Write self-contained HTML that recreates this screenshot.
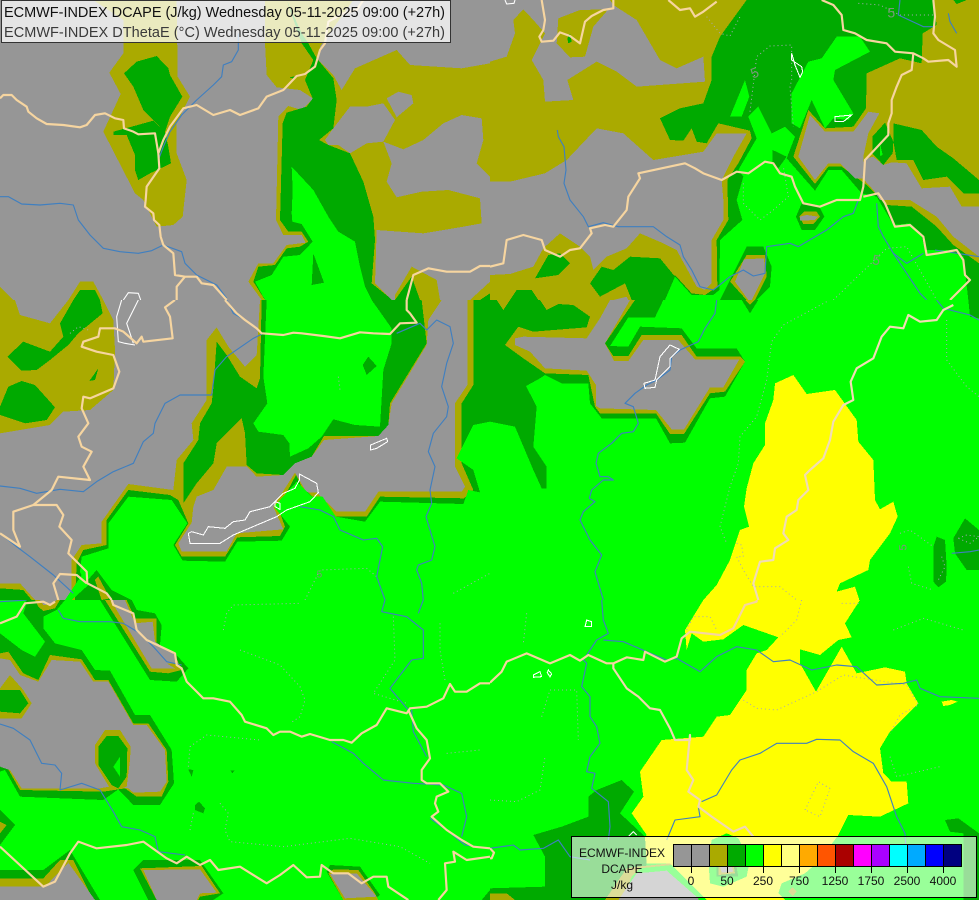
<!DOCTYPE html>
<html><head><meta charset="utf-8"><title>ECMWF-INDEX DCAPE</title>
<style>
html,body{margin:0;padding:0;background:#969696;width:979px;height:900px;overflow:hidden}
svg{display:block}
polygon{shape-rendering:crispEdges;stroke:none}
.g{fill:#969696}.o{fill:#aaaa00}.e{fill:#00aa00}.n{fill:#00ff00}.y{fill:#ffff00}
.b,.r,.w,.d{fill:none;stroke-linejoin:round}
.b{stroke:#f6d5a0;stroke-width:6.5}
.r{stroke:#3f7fc0;stroke-width:3.4}
.w{stroke:#fff;stroke-width:3.2}
.d{stroke:#a8a8b8;stroke-width:3;stroke-dasharray:3 9}
.l{font-family:"Liberation Sans",sans-serif;fill:#779977;font-size:42px}
.t{font-family:"Liberation Sans",sans-serif;font-size:12px;fill:#111;text-anchor:middle}
.h{font-family:"Liberation Sans",sans-serif;font-size:14.5px}
</style></head><body>
<svg width="979" height="900" viewBox="0 0 979 900" xmlns="http://www.w3.org/2000/svg">

<!-- tile 1 -->
<svg x="0" y="0" width="490" height="300" viewBox="0 0 1470 900">
<rect width="1470" height="900" class="g"/>
<polygon class="o" points="280,0 530,0 533,230 570,290 530,370 530,460 560,540 548,650 520,675 470,680 430,600 405,580 310,395 362,282 328,218 370,160 370,60"/>
<polygon class="o" points="795,0 795,130 800,225 830,262 900,270 940,296 905,330 865,318 835,350 828,660 850,705 905,705 917,728 860,735 820,790 775,790 745,845 785,900 1175,900 1125,850 1130,690 1270,700 1390,680 1445,670 1440,595 1470,530 1470,190 1385,205 1230,195 1190,150 1065,205 1025,270 1000,225 955,180 960,140 1060,0"/>
<polygon class="g" points="1150,425 1210,448 1270,420 1330,370 1385,345 1445,355 1450,420 1430,490 1470,530 1440,595 1345,570 1265,575 1190,592 1160,545 1175,490"/>
<polygon class="g" points="975,420 1000,385 1050,320 1100,320 1150,310 1185,360 1150,425 1100,430 1050,460 1015,435 985,435"/>
<polygon class="g" points="1160,295 1195,275 1235,285 1240,310 1190,352"/>
<polygon class="o" points="1185,885 1235,800 1310,840 1320,900 1185,900"/>
<polygon class="o" points="1410,900 1470,845 1470,900"/>
<polygon class="o" points="205,900 240,845 280,845 310,900"/>
<polygon class="o" points="0,860 40,900 0,900"/>
<polygon class="e" points="372,220 410,185 470,168 505,205 510,225 547,290 510,350 495,395 460,360 430,330 400,260"/>
<polygon class="e" points="340,395 395,380 460,362 495,395 505,440 513,490 450,520 415,540 405,510 405,465 380,405 340,405"/>
<polygon class="e" points="860,0 905,100 925,130 950,175 1000,235 1010,300 1000,385 957,420 985,435 1050,460 1090,545 1120,650 1125,720 1115,850 1165,890 1175,900 795,900 760,845 775,800 825,795 860,745 900,740 925,725 905,695 865,695 840,660 848,370 860,338 920,320 938,296 915,240 940,180 905,130"/>
<polygon class="e" points="868,232 890,228 885,238"/>
<polygon class="n" points="875,500 940,570 985,650 1015,695 1065,725 1080,800 1095,860 1115,900 795,900 765,845 815,825 850,770 900,765 938,725 905,672 877,665 875,640 878,570"/>
<polygon class="e" points="940,760 972,848 935,855"/>
<polygon class="e" points="220,900 240,870 285,870 300,900"/>
<polygon class="e" points="1185,900 1235,830 1260,900"/>
<polygon class="e" points="1440,900 1470,880 1470,900"/>
<polyline class="r" points="715,100 715,150 695,185 670,195 665,230 640,255 590,300 545,345 510,395 490,440 475,480"/>
<polyline class="r" points="0,590 25,590 65,612 120,615 180,610 220,615 235,660 270,705 310,745 360,755 415,760 455,752 490,735 545,755 555,790 590,825 650,855 680,895"/>
<polyline class="w" points="370,900 385,878 415,880 422,900"/>
<polyline class="b" points="0,295 10,285 35,285 50,300 80,320 85,335 110,355 140,372 190,375 240,382 260,375 285,345 315,340 345,355 370,360 372,385 400,395 415,403 465,400 470,430 475,460 478,505 440,560 437,600 435,620 460,640 462,660 478,675 482,710 490,735 520,760 525,825 555,830 590,830 605,850 640,855 680,900"/>
<polyline class="b" points="555,830 530,860 530,900"/>
<polyline class="b" points="475,460 490,420 510,380 550,325 590,315 640,345 690,330 720,345 775,325 800,290 850,270 890,228 915,222 945,200 960,150 975,130 985,65 1030,40 1070,30 1090,0"/>
<polyline class="b" points="1220,900 1240,825 1285,805 1340,815 1410,815 1440,798 1470,798"/>
</svg>

<!-- tile 2 -->
<svg x="490" y="0" width="489" height="300" viewBox="0 0 1467 900">
<rect width="1467" height="900" class="o"/>
<polygon class="g" points="0,0 360,0 370,15 440,60 510,180 560,205 640,170 645,245 440,260 380,215 320,185 232,240 250,300 165,305 160,240 125,180 165,100 130,60 100,28 70,60 75,100 50,170 0,185"/>
<polygon class="o" points="205,55 270,30 355,28 310,80 285,170 240,172 200,130"/>
<polygon class="g" points="0,545 60,545 165,520 230,480 320,385 400,400 445,440 490,480 640,455 680,400 770,400 730,470 695,540 700,600 700,660 665,720 665,850 645,870 620,860 560,750 520,730 450,700 410,745 350,770 310,810 300,770 270,740 210,700 160,745 130,800 60,822 0,825"/>
<polygon class="e" points="770,0 690,110 665,170 665,240 640,310 570,325 510,355 540,420 580,422 605,385 620,425 650,430 685,370 780,392 785,415 745,490 712,540 715,660 680,720 682,860 645,885 605,880 555,825 500,900 1467,900 1467,790 1390,735 1340,680 1265,620 1190,615 1130,555 1055,500 1015,500 975,552 910,470 955,330 1005,385 1090,380 1128,325 1130,220 1230,175 1295,190 1298,100 1340,75 1330,0"/>
<polygon class="e" points="1390,0 1430,0 1400,12"/>
<polygon class="g" points="925,470 960,345 1005,395 1090,395 1135,335 1168,340 1135,400 1120,470 1118,535 1095,535 1050,490 1015,490 975,540"/>
<polygon class="e" points="1147,410 1185,368 1210,425 1208,460 1180,495 1147,460"/>
<polygon class="e" points="1210,370 1295,390 1340,440 1390,475 1467,540 1467,580 1420,580 1370,530 1300,540 1270,480 1220,480 1210,425"/>
<polygon class="g" points="1120,478 1150,470 1180,495 1205,487 1250,490 1295,565 1380,560 1415,620 1467,620 1467,770 1390,710 1340,650 1260,600 1170,600 1150,570 1118,535"/>
<polygon class="n" points="1170,430 1178,465 1170,468"/>
<polygon class="n" points="525,900 555,830 605,885 670,885 688,870 690,720 757,660 740,600 760,530 745,510 800,415 775,350 805,320 845,400 885,380 915,410 890,475 975,572 1015,510 1055,510 1115,580 1160,590 1190,640 1210,675 1260,670 1295,710 1305,750 1370,750 1420,770 1435,900"/>
<polygon class="e" points="848,450 890,470 865,505 848,490"/>
<polygon class="n" points="905,280 955,185 995,175 1040,110 1110,110 1140,155 1035,210 1030,240 1090,340 1075,360 1030,355 1005,385 965,300 930,385 905,370"/>
<polygon class="n" points="720,350 765,240 778,290 755,350"/>
<polygon class="e" points="690,900 770,740 820,740 845,800 840,860 800,900"/>
<polygon class="o" points="720,845 770,765 825,765 830,830 795,900 770,900"/>
<polygon class="g" points="735,845 762,778 822,775 825,820 785,900 775,900"/>
<polygon class="e" points="918,650 935,610 985,615 1003,650 975,690 935,690"/>
<polygon class="o" points="928,650 942,635 980,635 990,650 970,672 940,672"/>
<polygon class="g" points="930,650 950,645 985,650 975,660 930,662"/>
<polygon class="e" points="135,835 175,765 210,760 240,790 205,825"/>
<polygon class="e" points="300,850 335,800 370,810 420,770 510,775 555,830 525,900 425,900 405,850 330,890"/>
<polygon class="e" points="60,900 80,870 125,870 145,900"/>
<polygon class="e" points="232,115 240,100 245,125 235,130"/>
<polygon class="g" points="370,900 410,890 415,900"/>
<polyline class="d" points="650,50 690,100 720,108 750,50"/>
<polyline class="d" points="1105,10 1170,15 1230,45 1330,45"/>
<polyline class="d" points="780,335 800,170 840,138 905,135 905,240 900,260 910,380"/>
<polyline class="d" points="760,550 760,610 810,660 850,630 895,590 880,500"/>
<polyline class="d" points="1030,900 1190,745 1250,740 1340,900"/>
<polyline class="r" points="202,390 205,410 222,440 228,510 222,550 240,600 280,650 295,680 340,668 385,680 490,680 530,710 570,735 580,770 605,810 630,860 670,870 720,830 760,810 790,828 825,820 830,740 900,730 925,740 1010,690 1060,650 1090,640 1105,600"/>
<polyline class="r" points="1160,610 1165,680 1180,710 1210,760 1250,790 1300,760"/>
<polyline class="r" points="1210,760 1290,880 1310,900"/>
<polyline class="r" points="1335,750 1467,770"/>
<polyline class="r" points="1230,0 1225,45 1300,80 1330,80"/>
<polyline class="r" points="1375,40 1380,65 1400,100"/>
<polyline class="w" points="45,0 50,12 72,10 75,0"/>
<polygon style="fill:none;stroke:#fff;stroke-width:3.2" points="905,160 905,180 935,200 938,215 930,232 915,195"/>
<polygon style="fill:none;stroke:#fff;stroke-width:3.2" points="1035,350 1085,345 1060,365 1035,365"/>
<polyline class="b" points="155,0 165,60 160,90 148,110 155,125 190,122 210,97 240,108 270,130 285,65 305,48 340,30 370,25 370,0"/>
<polyline class="b" points="535,0 570,30 600,25 615,50 640,35 680,5"/>
<polyline class="b" points="995,0 1030,15 1055,45 1060,90 1095,100 1130,120 1190,130 1215,155 1270,160 1300,175 1315,185 1375,180 1400,200 1395,150 1345,120 1330,100 1335,50 1330,0"/>
<polyline class="b" points="1270,160 1265,210 1235,225 1220,260 1205,300 1205,340 1195,370 1195,405 1125,480 1120,560 1110,600 1040,600 990,620 940,610 915,560 905,530 870,520 850,490 825,485 775,520 740,515 695,540 640,520 615,505 585,490 515,505 445,520 450,535 415,590 410,630 370,680 345,675 300,685 305,700 270,745 240,750 210,770 165,750 155,720 100,705 50,720 40,790 0,800"/>
<polyline class="b" points="1120,590 1165,580 1185,610 1215,680 1260,675 1300,710 1310,765 1345,760 1400,750 1420,780 1425,825 1440,840 1380,900"/>
<text class="l" transform="translate(1192,52)">5</text>
<text class="l" transform="translate(788,236) rotate(-20)" >5</text>
<text class="l" transform="translate(1145,792) rotate(10)">5</text>
</svg>

<!-- tile 3 -->
<svg x="0" y="300" width="490" height="300" viewBox="0 0 1470 900">
<rect width="1470" height="900" class="g"/>
<polygon class="o" points="0,0 45,0 60,45 150,70 205,0 310,0 340,60 345,150 340,270 270,330 190,335 150,375 0,400"/>
<polygon class="e" points="220,0 300,0 308,40 235,100 205,135 150,180 110,210 65,212 22,170 70,125 150,155 190,110 180,70"/>
<polygon class="e" points="0,320 25,260 65,243 105,255 165,322 140,360 75,370 0,345"/>
<polygon class="e" points="268,243 295,205 285,240"/>
<polygon class="o" points="780,0 770,165 735,200 685,140 650,82 620,120 620,300 575,370 580,420 530,480 520,570 385,552 305,665 305,730 245,735 215,780 215,900 1470,900 1470,0"/>
<polygon class="g" points="1325,0 1402,0 1402,255 1365,310 1365,500 1395,560 1385,575 1135,575 1095,635 1010,635 950,578 920,578 885,518 820,620 850,688 710,700 680,755 545,755 535,730 575,668 580,620 590,590 640,570 680,500 740,500 770,530 850,525 870,490 935,470 972,420 1135,408 1165,375 1175,310 1280,135 1285,60"/>
<polygon class="e" points="785,0 780,235 770,265 720,230 680,165 650,125 640,265 635,310 600,370 595,420 550,490 550,610 590,550 640,490 650,430 725,355 735,400 740,495 770,520 850,525 885,490 935,470 972,408 1135,408 1165,375 1170,310 1280,130 1265,0"/>
<polygon class="n" points="800,0 1115,0 1175,85 1175,130 1150,210 1140,380 1065,375 1000,358 965,410 925,445 870,470 868,430 850,405 775,395 760,370 802,310 790,230"/>
<polygon class="e" points="1105,170 1130,198 1100,225 1088,195"/>
<polygon class="e" points="1420,0 1420,255 1385,310 1385,490 1420,570 1392,595 1140,590 1100,650 1000,650 940,592 905,560 888,525 835,625 855,680 840,708 712,712 675,770 545,770 525,735 565,670 535,600 510,585 385,570 320,660 320,735 250,750 230,790 225,900 1470,900 1470,0"/>
<polygon class="n" points="385,590 515,600 562,670 520,735 548,782 675,785 712,725 845,722 870,680 822,620 890,545 935,590 968,590 1008,650 1095,665 1140,605 1390,612 1405,570 1440,577 1420,510 1370,475 1420,375 1470,365 1470,900 395,900 335,870 290,810 255,850 240,815 245,770 325,745 325,670"/>
<polygon class="n" points="195,900 245,825 265,855 215,900"/>
<polygon class="o" points="285,840 295,830 330,895 305,900"/>
<polygon class="o" points="0,850 60,850 105,900 0,900"/>
<polygon class="e" points="0,865 70,870 95,900 0,900"/>
<polyline class="d" points="915,900 960,810 1100,805 1130,830"/>
<polyline class="d" points="1360,880 1470,820"/>
<polyline class="d" points="210,100 235,80 265,90"/>
<polyline class="d" points="1015,230 1020,270"/>
<polyline class="r" points="0,558 60,565 110,580 180,568 250,575 290,545 340,515 400,490 430,425 460,400 465,370 495,310 540,285 635,285 645,210 680,170 760,115 790,100"/>
<polyline class="r" points="1190,100 1260,70 1280,90 1310,60 1350,80 1360,130 1340,190 1325,260 1345,320 1340,350 1300,400 1285,455 1305,500 1290,570 1295,610 1278,650 1305,740 1295,780 1255,795 1250,810 1265,850 1270,900"/>
<polyline class="r" points="900,620 960,630 1000,650 1020,690 1090,720 1130,715 1148,740 1130,830 1155,900"/>
<polyline class="r" points="0,700 50,740 90,770 160,825 220,880"/>
<polyline class="r" points="680,0 700,40 735,60"/>
<polyline class="w" points="365,0 350,50 355,125 375,130 405,135"/>
<polyline class="w" points="415,0 380,70 400,130"/>
<polygon style="fill:none;stroke:#fff;stroke-width:3.2" points="1112,435 1160,415 1163,425 1130,445 1112,450"/>
<polygon style="fill:none;stroke:#fff;stroke-width:3.2" points="898,522 950,550 955,578 930,605 860,630 830,650 700,705 660,730 570,730 565,700 575,695 610,705 625,680 675,685 700,665 735,660 750,635 810,620 850,580 885,565 898,540"/>
<polygon style="fill:none;stroke:#fff;stroke-width:3.2" points="825,605 840,610 840,628 825,620"/>
<polyline class="b" points="675,0 710,40 735,60 770,85 785,100 850,105 880,98 905,100 970,108 1020,115 1080,97 1120,100 1170,102 1200,70 1250,68 1230,40 1220,30 1220,0"/>
<polyline class="b" points="525,0 495,22 510,50 518,115 430,125 425,110 410,130 370,95 345,85 300,85 295,110 250,125 245,140 290,155 340,165 358,215 340,265 270,295 250,290 245,325 265,370 235,410 245,440 275,455 250,500 270,540 175,530 155,570 100,615 40,635 40,690 60,740 0,700"/>
<polyline class="b" points="100,615 170,615 190,645 178,680 215,720 205,760 260,815 262,850 320,880 335,900"/>
<polyline class="b" points="175,900 160,850 180,822 230,825 260,850"/>
<text class="l" transform="translate(950,832)" style="font-size:30px">5</text>
</svg>

<!-- tile 4 -->
<svg x="490" y="300" width="489" height="300" viewBox="0 0 1467 900">
<rect width="1467" height="900" class="n"/>
<polygon class="e" points="0,0 520,0 495,52 415,52 360,138 415,140 450,80 575,85 620,145 740,145 765,185 705,290 660,295 585,428 540,430 498,355 335,355 300,310 295,250 215,250 165,225 150,235 108,258 140,320 130,440 170,500 170,565 155,565 130,510 75,380 0,365"/>
<polygon class="o" points="45,135 85,80 130,95 290,82 300,50 250,15 205,12 170,30 150,0 435,0 345,130 370,168 415,168 455,105 575,105 620,170 752,170 765,185 705,275 660,280 582,402 540,402 498,340 330,340 315,320 295,225 165,220 100,175"/>
<polygon class="g" points="75,115 100,110 290,115 330,55 360,0 420,0 345,130 372,183 415,183 460,120 565,120 615,178 748,178 700,262 660,262 582,388 545,388 498,330 330,325 318,318 318,255 290,212 165,205 120,155 75,135"/>
<polygon class="o" points="20,0 40,30 60,0"/>
<polygon class="e" points="755,0 780,40 805,0"/>
<polygon class="o" points="765,0 780,14 795,0"/>
<polygon class="e" points="1435,0 1467,0 1467,55 1440,50"/>
<polygon class="y" points="855,250 910,225 950,282 1035,270 1100,360 1105,425 1150,480 1155,600 1170,628 1210,605 1223,650 1200,700 1140,780 1135,810 1050,850 1040,875 1095,860 1108,900 640,900 680,855 720,780 750,690 777,680 762,620 770,565 790,490 825,435 825,370 850,300"/>
<polygon class="e" points="1330,740 1340,710 1365,720 1370,800 1368,845 1345,862 1330,845"/>
<polygon class="e" points="1390,715 1425,655 1467,690 1467,810 1430,810 1395,760"/>
<polyline class="d" points="1010,5 880,75 845,125 830,240 800,350 750,410 745,490 720,560 690,680 710,730"/>
<polyline class="d" points="1370,60 1370,180 1430,260 1467,290"/>
<polyline class="d" points="740,730 755,735 760,770 740,770 760,810 790,860 870,860 920,900"/>
<polyline class="d" points="1230,700 1260,690 1330,740"/>
<polyline class="d" points="1255,800 1265,850 1330,870"/>
<polyline class="d" points="1405,715 1430,705 1467,710 1440,730 1405,715"/>
<polyline class="d" points="1355,770 1365,800 1345,840"/>
<polyline class="r" points="680,0 675,40 645,85 625,125 570,150 545,170 540,210 500,240 470,255 435,280 405,310 430,320 445,370 430,395 395,400 365,430 325,460 318,490 330,530 355,530 370,540 340,540 305,570 298,595 315,605 280,635 270,660 300,720 335,765 315,815 340,900"/>
<polyline class="r" points="1340,0 1360,25 1440,45 1467,60"/>
<polyline class="r" points="1385,760 1440,755 1467,750"/>
<polygon style="fill:none;stroke:#fff;stroke-width:3.2" points="540,135 568,148 540,175 540,200 500,240 495,262 465,265 462,250 495,240 510,170"/>
<polyline class="b" style="stroke:#f1dcb4" points="1390,15 1360,30 1340,60 1290,65 1255,45 1240,85 1200,80 1175,110 1150,175 1100,205 1082,245 1090,300 1060,315 1030,365 1020,420 1000,475 960,510 945,525 955,570 925,600 920,630 890,650 880,700 895,720 855,745 850,780 810,785 790,850 805,900"/>
<text class="l" transform="translate(1250,752) rotate(-90)" style="font-size:34px">5</text>
</svg>

<!-- tile 5 -->
<svg x="0" y="600" width="490" height="300" viewBox="0 0 1470 900">
<rect width="1470" height="900" class="n"/>
<polygon class="e" points="0,100 65,150 105,170 135,125 70,40 80,10 75,0 195,0 170,30 130,50 130,85 165,130 245,150 285,210 330,212 405,345 450,345 515,450 522,550 480,615 400,615 355,568 310,600 60,590 15,510 0,515"/>
<polygon class="o" points="0,160 25,155 70,220 115,240 150,165 245,178 285,240 325,240 400,370 445,370 500,450 505,545 485,590 410,590 375,565 310,575 60,570 20,500 0,500"/>
<polygon class="g" points="0,175 30,180 60,225 115,245 155,180 240,185 280,245 325,245 400,375 440,375 495,450 500,545 480,575 400,578 385,565 328,560 300,565 65,565 30,510 0,500"/>
<polygon class="o" points="0,265 30,225 70,270 95,310 65,355 0,355"/>
<polygon class="e" points="0,270 60,270 85,310 60,340 0,335"/>
<polygon class="o" points="285,435 315,390 360,390 392,440 390,480 380,560 355,568 330,565 285,490"/>
<polygon class="e" points="295,440 320,408 355,408 382,445 380,530 355,565 335,555 295,495"/>
<polygon class="n" points="340,500 360,470 360,530"/>
<polygon class="o" points="105,0 180,0 165,25 130,33 115,20"/>
<polygon class="g" points="120,0 170,0 160,12 130,15"/>
<polygon class="e" points="300,0 395,0 410,30 465,40 485,75 480,135 525,160 565,205 530,245 450,240"/>
<polygon class="o" points="315,0 380,0 405,55 470,55 470,130 525,165 545,210 505,220 450,215"/>
<polygon class="g" points="332,0 375,0 405,70 458,65 465,125 525,165 535,190 500,190 525,205 455,205"/>
<polygon class="e" points="0,630 45,675 0,735"/>
<polygon class="o" points="0,665 20,675 0,700"/>
<polygon class="e" points="0,810 130,810 210,750 300,900 0,900"/>
<polygon class="o" points="0,835 130,835 180,780 220,780 280,900 0,900"/>
<polygon class="g" points="0,860 135,860 205,788 285,900 0,900"/>
<polygon class="e" points="400,810 430,780 600,780 670,880 640,900 445,900"/>
<polygon class="o" points="420,805 605,798 660,880 600,890 595,900 470,900"/>
<polygon class="g" points="430,810 600,808 650,878 600,880 590,900 470,900"/>
<polygon class="e" points="980,815 990,795 1080,800 1140,885 1120,900 1030,900"/>
<polygon class="o" points="985,820 1000,808 1075,810 1125,880 1135,900 1030,900"/>
<polygon class="g" points="990,822 1070,820 1130,890 1035,895"/>
<polygon class="e" points="1445,900 1470,870 1470,900"/>
<polygon class="e" points="565,508 580,510 575,530"/>
<polygon class="e" points="692,512 703,512 697,520"/>
<polygon class="e" points="585,615 597,605 615,625 610,640 585,630"/>
<polyline class="d" points="670,90 680,40 700,15 900,10"/>
<polyline class="d" points="720,150 840,195 900,260 915,300 900,350 870,370"/>
<polyline class="d" points="1180,50 1185,180 1120,280 1220,310"/>
<polyline class="d" points="1320,70 1320,150 1335,240"/>
<polyline class="d" points="565,500 570,440 620,405 780,420"/>
<polyline class="d" points="580,640 570,690"/>
<polyline class="d" points="660,610 685,640 675,690 690,725 850,740 1050,715 1200,740 1290,790"/>
<polyline class="d" points="1340,460 1440,450"/>
<polyline class="r" points="0,5 80,0"/>
<polyline class="r" points="175,30 190,55 240,65 330,65 370,70 420,100 460,140 500,185 545,195"/>
<polyline class="r" points="0,372 40,385 90,420 125,490 165,495 185,520 180,570 245,550 300,570 340,635 365,680 420,690 465,710 475,755 555,765"/>
<polyline class="r" points="995,425 1060,460 1090,490 1150,540 1240,550 1330,555 1385,580 1400,650 1385,710"/>
<polyline class="r" points="1155,0 1145,35 1220,50 1270,90 1270,175 1235,180 1170,265 1225,330"/>
<polyline class="r" points="1270,0 1255,40"/>
<polyline class="r" points="1235,330 1240,395 1280,470"/>
<polyline class="r" points="1290,655 1340,690 1395,735 1470,745"/>
<polyline class="b" points="0,70 50,50 75,10 130,5 150,15 165,5"/>
<polyline class="b" points="335,0 340,15 400,40 410,90 440,120 525,160 530,195 545,205 560,245 590,275 610,295 640,295 690,305 725,345 735,365 800,385 820,405 840,395 870,395 905,410 930,402 990,420 1030,420 1055,428 1085,400 1130,375 1160,325 1220,340 1230,325 1280,320 1330,295 1350,252 1365,275 1400,275 1440,250 1470,250"/>
<polyline class="b" points="1225,330 1250,385 1280,420 1290,475 1265,510 1265,540 1280,550 1320,550 1345,575 1310,590 1305,610 1315,635 1295,650 1340,690 1385,720 1420,740 1470,745"/>
<polyline class="b" points="0,740 130,860 165,845 210,760 235,725 290,745 380,735 430,725 500,775 530,790 560,770 600,795 630,780 655,810 720,800 800,850 840,825 880,795 920,832 960,830 965,795 1000,820 1045,820 1085,850 1120,830 1160,830 1165,860 1210,890 1225,900"/>
<polyline class="b" points="1315,900 1340,870 1335,790 1365,785 1360,755 1400,780 1470,770"/>
</svg>

<!-- tile 6 -->
<svg x="490" y="600" width="489" height="300" viewBox="0 0 1467 900">
<rect width="1467" height="900" class="n"/>
<polygon class="e" points="130,705 215,680 295,650 295,590 320,570 395,540 432,575 390,640 465,710 470,800 420,810 385,900 0,900 0,865 165,860 165,770"/>
<polygon class="o" points="0,880 50,880 75,900 0,900"/>
<polygon class="e" points="1365,660 1405,655 1467,700 1467,900 1420,900 1420,700 1380,695"/>
<polygon class="y" points="640,0 1110,0 1065,70 1085,112 1045,120 990,165 930,148 930,190 978,275 1055,140 1100,220 1185,202 1245,215 1250,250 1285,310 1250,345 1200,395 1170,445 1180,520 1205,545 1250,545 1255,610 1170,650 1075,645 1045,705 985,785 945,820 875,850 865,880 885,900 650,900 540,790 470,790 465,710 470,705 425,640 460,590 450,515 515,420 640,410 680,350 720,345 770,270 770,210 800,160 830,150 865,112 760,75 700,118 640,125 605,100 590,150 585,90"/>
<polygon class="y" points="1355,305 1385,300 1403,305 1380,315 1360,318"/>
<polygon class="n" points="665,720 710,700 745,715 780,780 770,830 700,860 660,850 655,780"/>
<polygon class="e" points="680,780 735,775 745,830 680,830"/>
<polygon class="o" points="685,790 730,790 735,820 685,825"/>
<polygon class="g" points="690,800 725,798 730,815 695,818"/>
<polygon class="o" points="345,900 410,805 440,800 540,790 650,900"/>
<polygon class="n" points="400,900 425,830 450,805 545,795 640,890 650,900"/>
<polygon class="g" points="385,900 440,820 530,812 625,895 625,900"/>
<polygon class="o" points="895,875 908,862 920,875 908,888"/>
<polyline class="d" points="590,90 610,50 660,50 680,90"/>
<polyline class="d" points="935,0 920,60 870,110"/>
<polyline class="d" points="760,300 800,325 860,330 980,275 1060,225 1120,235 1250,255 1285,315 1230,345 1200,400"/>
<polygon style="fill:none;stroke:#a8a8b8;stroke-width:3;stroke-dasharray:3 9" points="945,630 985,545 1020,565 990,650"/>
<polyline class="d" points="1055,10 1110,10"/>
<polyline class="d" points="1210,90 1300,55 1420,90"/>
<polyline class="d" points="155,350 180,270 260,270 265,420"/>
<polyline class="d" points="0,600 80,605 150,570 165,470"/>
<polyline class="d" points="110,40 100,130"/>
<polyline class="d" points="1200,470 1220,530 1350,500"/>
<polyline class="r" points="335,0 340,60 355,100 320,120 280,180 290,190 275,260 300,290 300,350 320,380 330,430 300,470 290,515 315,520 305,565 355,605 360,680 355,720"/>
<polyline class="r" points="340,120 400,125 470,155 530,180 560,175 630,215 680,170 740,140 800,150 850,185 900,180 965,210 1040,195 1100,200 1160,255 1240,250 1280,240 1290,265 1350,290 1467,295"/>
<polyline class="r" points="635,605 680,585 725,510 750,480 810,460 860,430 950,430 980,418 1050,420 1090,455 1150,490 1190,560 1220,650 1245,700 1250,780"/>
<polyline class="r" points="0,745 70,735 90,750 160,745 205,720 240,770 300,780"/>
<polyline class="r" points="530,720 555,660 630,650 625,620"/>
<polygon style="fill:none;stroke:#fff;stroke-width:3.2" points="285,80 290,60 305,65 305,80"/>
<polygon style="fill:none;stroke:#fff;stroke-width:3.2" points="130,225 150,215 155,230 130,232"/>
<polygon style="fill:none;stroke:#fff;stroke-width:3.2" points="175,210 185,222 180,230 172,218"/>
<polyline class="w" points="415,710 430,695 440,705"/>
<polyline class="b" points="0,745 12,758 5,775 0,775"/>
<polyline class="b" points="0,248 35,215 50,185 110,160 180,190 240,165 270,182 295,165 350,190 370,190 410,172 460,180 465,155 525,185 560,170 575,115 600,95 690,105 730,85 765,15 800,5 800,0"/>
<polyline class="b" style="stroke:#f1d8b0" points="370,190 370,205 410,265 445,290 480,325 510,330 540,385 555,420 600,420 600,405 590,510 610,540 595,575 630,600 625,620 665,650 730,695 765,680 790,710"/>
</svg>

<!-- top title box -->
<rect x="1.5" y="0.5" width="449" height="42" fill="#ffffff" fill-opacity="0.75" stroke="#333" stroke-width="1"/>
<text class="h" x="4" y="17" fill="#111" textLength="441" lengthAdjust="spacing">ECMWF-INDEX DCAPE (J/kg) Wednesday 05-11-2025 09:00 (+27h)</text>
<text class="h" x="4" y="37" fill="#3a3a3a" textLength="441" lengthAdjust="spacing">ECMWF-INDEX DThetaE (°C) Wednesday 05-11-2025 09:00 (+27h)</text>

<!-- colour legend -->
<rect x="571.5" y="836.5" width="405" height="61" fill="#ffffff" fill-opacity="0.6" stroke="#000" stroke-width="1"/>
<text class="t" x="622" y="857">ECMWF-INDEX</text>
<text class="t" x="622" y="873">DCAPE</text>
<text class="t" x="622" y="889">J/kg</text>
<g stroke="#000" stroke-width="1" shape-rendering="crispEdges">
<rect x="673.5" y="844.5" width="18" height="22" fill="#969696"/>
<rect x="691.5" y="844.5" width="18" height="22" fill="#969696"/>
<rect x="709.5" y="844.5" width="18" height="22" fill="#aaaa00"/>
<rect x="727.5" y="844.5" width="18" height="22" fill="#00aa00"/>
<rect x="745.5" y="844.5" width="18" height="22" fill="#00ff00"/>
<rect x="763.5" y="844.5" width="18" height="22" fill="#ffff00"/>
<rect x="781.5" y="844.5" width="18" height="22" fill="#ffff80"/>
<rect x="799.5" y="844.5" width="18" height="22" fill="#ffaa00"/>
<rect x="817.5" y="844.5" width="18" height="22" fill="#ff5500"/>
<rect x="835.5" y="844.5" width="18" height="22" fill="#aa0000"/>
<rect x="853.5" y="844.5" width="18" height="22" fill="#ff00ff"/>
<rect x="871.5" y="844.5" width="18" height="22" fill="#aa00ff"/>
<rect x="889.5" y="844.5" width="18" height="22" fill="#00ffff"/>
<rect x="907.5" y="844.5" width="18" height="22" fill="#00aaff"/>
<rect x="925.5" y="844.5" width="18" height="22" fill="#0000ff"/>
<rect x="943.5" y="844.5" width="18" height="22" fill="#000080"/>
<path fill="none" d="M691.5 867V873M727.5 867V873M763.5 867V873M799.5 867V873M835.5 867V873M871.5 867V873M907.5 867V873M943.5 867V873"/>
</g>
<text class="t" x="691" y="885">0</text>
<text class="t" x="727" y="885">50</text>
<text class="t" x="763" y="885">250</text>
<text class="t" x="799" y="885">750</text>
<text class="t" x="835" y="885">1250</text>
<text class="t" x="871" y="885">1750</text>
<text class="t" x="907" y="885">2500</text>
<text class="t" x="943" y="885">4000</text>
</svg>
</body></html>
